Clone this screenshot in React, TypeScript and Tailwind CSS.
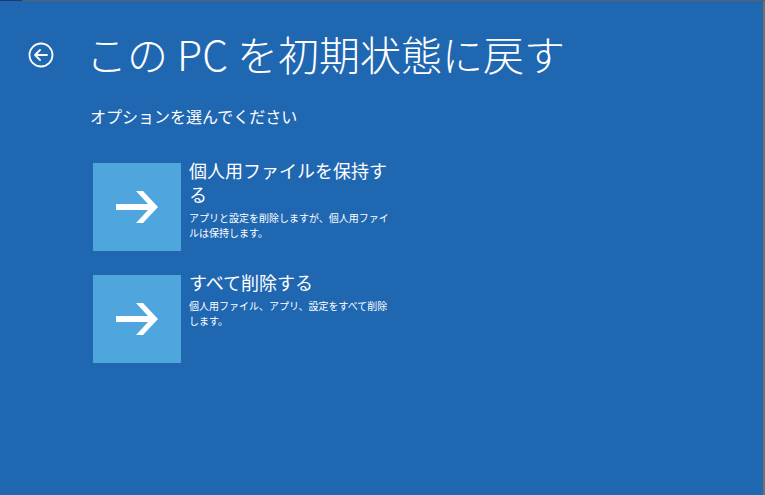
const jp = { fontFamily: '"Noto Sans CJK JP", "Noto Sans", sans-serif' };

const ArrowTile = () => (
  <div className="w-[88px] h-[88px] shrink-0 bg-[#4ea6dd] flex items-center justify-center">
    <svg width="42" height="32" viewBox="0 0 42 32">
      <polygon points="20,0 27,0 42,16 27,32 20,32 32,19 0,19 0,13 32,13" fill="#ffffff" />
    </svg>
  </div>
);

const options = [
  {
    title: '個人用ファイルを保持する',
    desc: 'アプリと設定を削除しますが、個人用ファイルは保持します。',
  },
  {
    title: 'すべて削除する',
    desc: '個人用ファイル、アプリ、設定をすべて削除します。',
  },
];

const App = () => {
  return (
    <div className="w-[765px] h-[495px] flex flex-col bg-[#2067b2] overflow-hidden" style={jp}>
      {/* top edge strip */}
      <div className="h-px flex shrink-0">
        <div className="w-[22px] bg-[#1d3b66]" />
        <div className="flex-1 bg-[#5b5e62]" />
      </div>

      <div className="flex-1 flex">
        <div className="flex-1 pt-[28px]">
          {/* header */}
          <div className="flex items-center">
            <svg width="26" height="26" viewBox="0 0 26 26" className="ml-[28px] mt-[4px]">
              <circle cx="13" cy="13" r="11.5" fill="none" stroke="#ffffff" strokeWidth="1.8" />
              <path d="M7 13 H19 M12 8 L7 13 L12 18" fill="none" stroke="#ffffff" strokeWidth="1.8" strokeLinecap="round" strokeLinejoin="round" />
            </svg>
            <h1 className="ml-[32px] text-[41px] leading-[48px] font-light text-white whitespace-nowrap">
              この PC を初期状態に戻す
            </h1>
          </div>

          <div className="pl-[90px]">
            <p className="mt-[27px] text-[16px] leading-[24px] text-white">オプションを選んでください</p>

            <div className="mt-[35px] ml-[3px] flex flex-col gap-[24px]">
              {options.map((opt) => (
                <div key={opt.title} className="flex gap-[8px]">
                  <ArrowTile />
                  <div className="w-[202px] -mt-[5px] text-white">
                    <div className="text-[18px] leading-[24px]">{opt.title}</div>
                    <div className="mt-[4px] text-[10px] leading-[15px]">{opt.desc}</div>
                  </div>
                </div>
              ))}
            </div>
          </div>
        </div>
        {/* right edge strip */}
        <div className="w-[2px] bg-[#6c726c]" />
      </div>
    </div>
  );
};

export default App;
